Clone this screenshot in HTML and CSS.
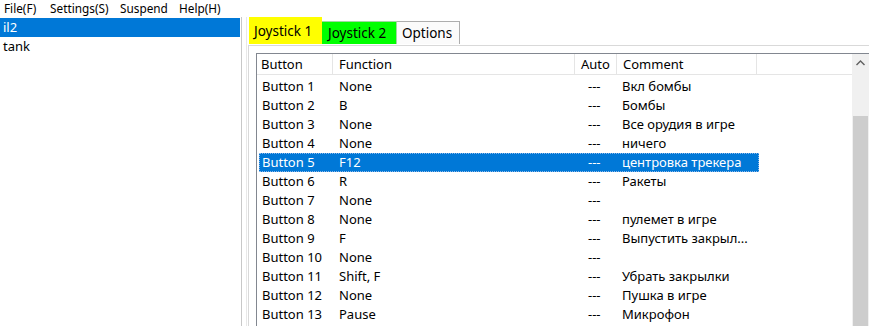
FILE: index.html
```html
<!DOCTYPE html>
<html>
<head>
<meta charset="utf-8">
<link rel="stylesheet" href="styles.css">
</head>
<body>
<div class="menubar">
  <span class="menu-item m1">File(F)</span>
  <span class="menu-item m2">Settings(S)</span>
  <span class="menu-item m3">Suspend</span>
  <span class="menu-item m4">Help(H)</span>
</div>
<div class="main">
  <div class="profiles">
    <div class="profile selected">il2</div>
    <div class="profile">tank</div>
  </div>
  <div class="splitter"></div>
  <div class="right">
    <div class="tabs">
      <div class="tab tab-j1 active">Joystick 1</div>
      <div class="tab tab-j2">Joystick 2</div>
      <div class="tab tab-opt">Options</div>
    </div>
    <div class="panel">
      <div class="listview">
        <div class="list-body">
          <div class="header">
            <div class="hcell c-btn">Button</div>
            <div class="hcell c-fn">Function</div>
            <div class="hcell c-auto">Auto</div>
            <div class="hcell c-cm">Comment</div>
            <div class="hcell c-rest"></div>
          </div>
          <div class="row"><span class="c-btn">Button 1</span><span class="c-fn">None</span><span class="c-auto">---</span><span class="c-cm">Вкл бомбы</span></div>
          <div class="row"><span class="c-btn">Button 2</span><span class="c-fn">B</span><span class="c-auto">---</span><span class="c-cm">Бомбы</span></div>
          <div class="row"><span class="c-btn">Button 3</span><span class="c-fn">None</span><span class="c-auto">---</span><span class="c-cm">Все орудия в игре</span></div>
          <div class="row"><span class="c-btn">Button 4</span><span class="c-fn">None</span><span class="c-auto">---</span><span class="c-cm">ничего</span></div>
          <div class="row sel"><span class="c-btn">Button 5</span><span class="c-fn">F12</span><span class="c-auto">---</span><span class="c-cm">центровка трекера</span></div>
          <div class="row"><span class="c-btn">Button 6</span><span class="c-fn">R</span><span class="c-auto">---</span><span class="c-cm">Ракеты</span></div>
          <div class="row"><span class="c-btn">Button 7</span><span class="c-fn">None</span><span class="c-auto">---</span><span class="c-cm"></span></div>
          <div class="row"><span class="c-btn">Button 8</span><span class="c-fn">None</span><span class="c-auto">---</span><span class="c-cm">пулемет в игре</span></div>
          <div class="row"><span class="c-btn">Button 9</span><span class="c-fn">F</span><span class="c-auto">---</span><span class="c-cm">Выпустить закрыл...</span></div>
          <div class="row"><span class="c-btn">Button 10</span><span class="c-fn">None</span><span class="c-auto">---</span><span class="c-cm"></span></div>
          <div class="row"><span class="c-btn">Button 11</span><span class="c-fn">Shift, F</span><span class="c-auto">---</span><span class="c-cm">Убрать закрылки</span></div>
          <div class="row"><span class="c-btn">Button 12</span><span class="c-fn">None</span><span class="c-auto">---</span><span class="c-cm">Пушка в игре</span></div>
          <div class="row"><span class="c-btn">Button 13</span><span class="c-fn">Pause</span><span class="c-auto">---</span><span class="c-cm">Микрофон</span></div>
        </div>
        <div class="scrollbar">
          <div class="arrow">
            <svg width="9" height="6" viewBox="0 0 9 6"><path d="M0.5 5 L4.5 1 L8.5 5" fill="none" stroke="#606060" stroke-width="1.4"/></svg>
          </div>
          <div class="track"><div class="thumb"></div></div>
        </div>
      </div>
    </div>
  </div>
</div>
</body>
</html>
```
FILE: styles.css
```css
* { box-sizing: border-box; }
html, body {
  margin: 0;
  padding: 0;
  background: #ffffff;
  width: 869px;
  height: 326px;
  overflow: hidden;
  font-family: "Noto Sans", "Open Sans", sans-serif;
  font-size: 13px;
  color: #000;
}
.menubar {
  height: 17px;
  display: flex;
  align-items: center;
  padding-left: 4px;
  line-height: 17px;
  font-size: 11.8px;
}
.menu-item { display: block; }
.m1 { width: 46px; }
.m2 { width: 70px; }
.m3 { width: 59px; }
.main {
  display: flex;
  height: 309px;
}
.profiles {
  width: 242px;
  padding-top: 1px;
}
.profile {
  height: 18px;
  line-height: 18px;
  padding-left: 3px;
}
.profile.selected {
  background: #0078d7;
  color: #fff;
  height: 19px;
  line-height: 19px;
}
.splitter {
  width: 6px;
  border-left: 1px solid #c8c8c8;
  border-right: 1px solid #e8e8e8;
  margin-left: 1px;
  background: #fff;
}
.right {
  flex: 1;
  display: flex;
  flex-direction: column;
  padding-left: 1px;
}
.tabs {
  display: flex;
  align-items: flex-end;
  height: 27px;
  padding-left: 1px;
}
.tab {
  height: 23px;
  line-height: 22px;
  border: 1px solid #adadad;
  border-bottom: none;
  padding: 0 0 0 5px;
  font-size: 13.5px;
  white-space: nowrap;
}
.tab-j1 {
  background: #ffff00;
  height: 27px;
  line-height: 27px;
  border-color: #ffff00;
  width: 73px;
  padding-left: 4px;
}
.tab-j2 { background: #00ff00; border-color: #a0d8a0; border-left: none; width: 75px; padding-left: 6px; }
.tab-opt { background: #fbfbfb; border-left: none; width: 63px; padding-left: 5px; }
.panel {
  flex: 1;
  border-top: 1px solid #d9d9d9;
  border-left: 1px solid #d9d9d9;
  margin-top: 1px;
  padding: 7px 0 0 7px;
  background: #fff;
}
.listview {
  height: 100%;
  border-left: 1px solid #828790;
  border-top: 1px solid #828790;
  display: flex;
}
.list-body {
  flex: 1;
}
.header {
  display: flex;
  height: 21px;
  border-bottom: 1px solid #e5e5e5;
}
.hcell {
  height: 21px;
  line-height: 20px;
  border-right: 1px solid #e5e5e5;
  padding-left: 4px;
  white-space: nowrap;
}
.c-btn { width: 76px; padding-left: 4px; }
.c-fn { width: 242px; padding-left: 6px; }
.c-auto { width: 42px; padding-left: 6px; }
.c-cm { width: 140px; padding-left: 6px; }
.c-rest { width: 95px; }
.header .c-rest { border-right: none; }
.row {
  display: flex;
  height: 19px;
  line-height: 19px;
  width: 500px;
  margin-left: 2px;
  white-space: nowrap;
}
.row span { display: block; overflow: hidden; }
.row .c-btn { width: 74px; padding-left: 3px; }
.row .c-fn { width: 242px; padding-left: 6px; }
.row .c-auto { width: 42px; padding-left: 13px; }
.row .c-cm { width: 140px; padding-left: 5px; }
.header + .row { margin-top: 2px; }
.row.sel {
  background: #0078d7;
  color: #fff;
  outline: 1px dotted #8fb8e8;
  outline-offset: -1px;
}
.scrollbar {
  width: 17px;
  background: #f0f0f0;
  display: flex;
  flex-direction: column;
}
.arrow {
  height: 17px;
  display: flex;
  align-items: center;
  justify-content: center;
}
.track { flex: 1; padding-top: 45px; }
.thumb {
  height: 100%;
  background: #cdcdcd;
  margin: 0 1px;
}
```
